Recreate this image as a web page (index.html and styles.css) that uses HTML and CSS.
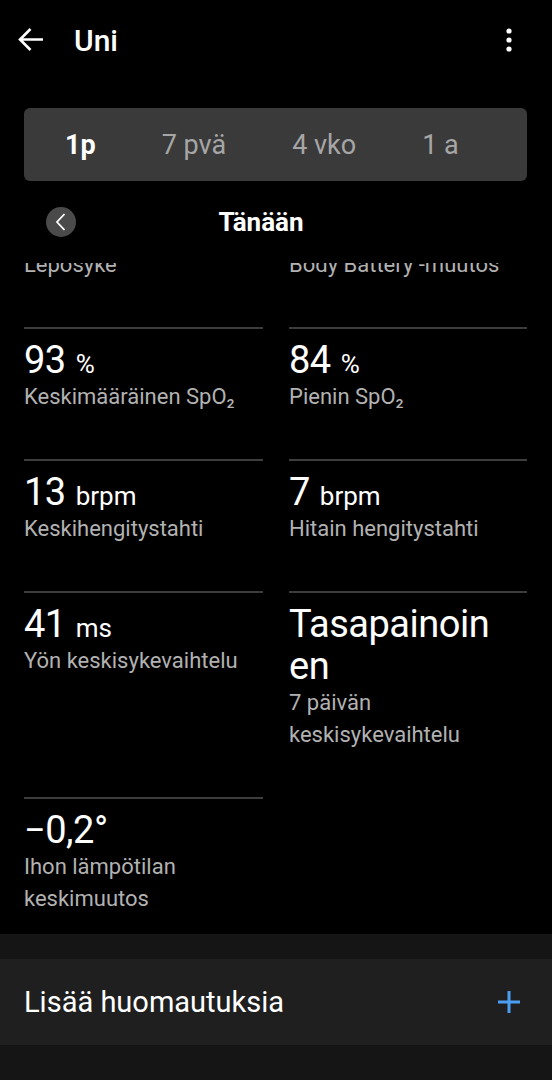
FILE: index.html
```html
<!DOCTYPE html>
<html lang="fi">
<head>
<meta charset="UTF-8">
<meta name="viewport" content="width=device-width, initial-scale=1.0">
<title>Uni</title>
<link rel="stylesheet" href="styles.css">
</head>
<body>
<div class="screen">

  <!-- Yläpalkki -->
  <header class="topbar">
    <svg class="back" width="26" height="26" viewBox="0 0 26 26">
      <path d="M25 12.5H2M12.5 2L2 12.5 12.5 23" fill="none" stroke="#fff" stroke-width="2.6"/>
    </svg>
    <h1 class="title">Uni</h1>
    <svg class="menu" width="24" height="24" viewBox="0 0 24 24">
      <circle cx="12" cy="3" r="2.6" fill="#fff"/>
      <circle cx="12" cy="12" r="2.6" fill="#fff"/>
      <circle cx="12" cy="21" r="2.6" fill="#fff"/>
    </svg>
  </header>

  <!-- Aikavälin valinta -->
  <nav class="tabs">
    <span class="tab active">1p</span>
    <span class="tab">7 pvä</span>
    <span class="tab">4 vko</span>
    <span class="tab">1 a</span>
  </nav>

  <div class="datenav">
    <button class="prev">
      <svg width="30" height="30" viewBox="0 0 30 30">
        <path d="M18.5 7L11 15l7.5 8" fill="none" stroke="#fff" stroke-width="1.8"/>
      </svg>
    </button>
    <div class="date">Tänään</div>
    <span class="spacer"></span>
  </div>

  <!-- Vieritettävä sisältö -->
  <div class="scroller">
    <div class="scroll-content">
      <div class="stats">
        <div class="stat">
          <div class="value">52 <span class="unit">bpm</span></div>
          <div class="label">Leposyke</div>
        </div>
        <div class="stat">
          <div class="value">+48</div>
          <div class="label">Body Battery -muutos</div>
        </div>

        <div class="stat">
          <div class="value">93 <span class="unit">%</span></div>
          <div class="label">Keskimääräinen SpO₂</div>
        </div>
        <div class="stat">
          <div class="value">84 <span class="unit">%</span></div>
          <div class="label">Pienin SpO₂</div>
        </div>

        <div class="stat">
          <div class="value">13 <span class="unit">brpm</span></div>
          <div class="label">Keskihengitystahti</div>
        </div>
        <div class="stat">
          <div class="value">7 <span class="unit">brpm</span></div>
          <div class="label">Hitain hengitystahti</div>
        </div>

        <div class="stat">
          <div class="value">41 <span class="unit">ms</span></div>
          <div class="label">Yön keskisykevaihtelu</div>
        </div>
        <div class="stat">
          <div class="value narrow">Tasapainoinen</div>
          <div class="label">7 päivän keskisykevaihtelu</div>
        </div>

        <div class="stat">
          <div class="value">−0,2°</div>
          <div class="label">Ihon lämpötilan keskimuutos</div>
        </div>
      </div>

      <div class="notes-area">
        <div class="notes">
          <span class="notes-text">Lisää huomautuksia</span>
          <svg width="24" height="24" viewBox="0 0 24 24">
            <path d="M12 1v22M1 12h22" stroke="#4c9ef2" stroke-width="3"/>
          </svg>
        </div>
      </div>
    </div>
  </div>

</div>
</body>
</html>
```

FILE: styles.css
```css
body {
  margin: 0;
  background-color: #000;
  color: #fff;
  font-family: Roboto, "Noto Sans", sans-serif;
}

.screen {
  display: flex;
  flex-direction: column;
  height: 100vh;
  overflow: hidden;
}

.topbar {
  display: flex;
  align-items: center;
  height: 80px;
  flex-shrink: 0;
}

.back {
  margin-left: 18px;
}

.title {
  flex: 1;
  margin: 0 0 0 30px;
  font-size: 30px;
  font-weight: 500;
}

.menu {
  margin-right: 31px;
}

.tabs {
  display: flex;
  align-items: center;
  gap: 66px;
  flex-shrink: 0;
  height: 73px;
  margin: 28px 25px 0 24px;
  padding-left: 41px;
  background-color: #3a3a3a;
  border-radius: 6px;
}

.tab {
  font-size: 27px;
  color: #a6a6a6;
}

.tab.active {
  color: #fff;
  font-weight: 700;
}

.datenav {
  display: flex;
  align-items: center;
  flex-shrink: 0;
  height: 82px;
  padding: 0 76px 0 46px;
}

.prev {
  width: 30px;
  height: 30px;
  padding: 0;
  border: none;
  border-radius: 50%;
  background-color: #4a4a4a;
}

.prev svg {
  display: block;
}

.date {
  flex: 1;
  text-align: center;
  font-size: 26px;
  font-weight: 700;
}

.spacer {
  width: 30px;
}

.scroller {
  flex: 1;
  overflow: hidden;
}

.scroll-content {
  margin-top: -68px;
}

.stats {
  display: grid;
  grid-template-columns: 239px 238px;
  column-gap: 26px;
  row-gap: 27px;
  padding: 0 24px;
}

.stat {
  border-top: 2px solid #3d3d3d;
  padding: 10px 0 19px;
}

.value {
  font-size: 38px;
  line-height: 42px;
  letter-spacing: -0.5px;
}

.value.narrow {
  max-width: 210px;
  overflow-wrap: anywhere;
}

.unit {
  font-size: 26px;
  line-height: 1;
  letter-spacing: 0;
  margin-left: 1px;
}

.label {
  font-size: 22px;
  line-height: 32px;
  color: #b2b2b2;
}

.notes-area {
  min-height: 200px;
  padding-top: 25px;
  background-color: #151515;
}

.notes {
  display: flex;
  align-items: center;
  justify-content: space-between;
  height: 86px;
  padding: 0 31px 0 24px;
  background-color: #1f1f1f;
}

.notes-text {
  font-size: 29px;
}
```
